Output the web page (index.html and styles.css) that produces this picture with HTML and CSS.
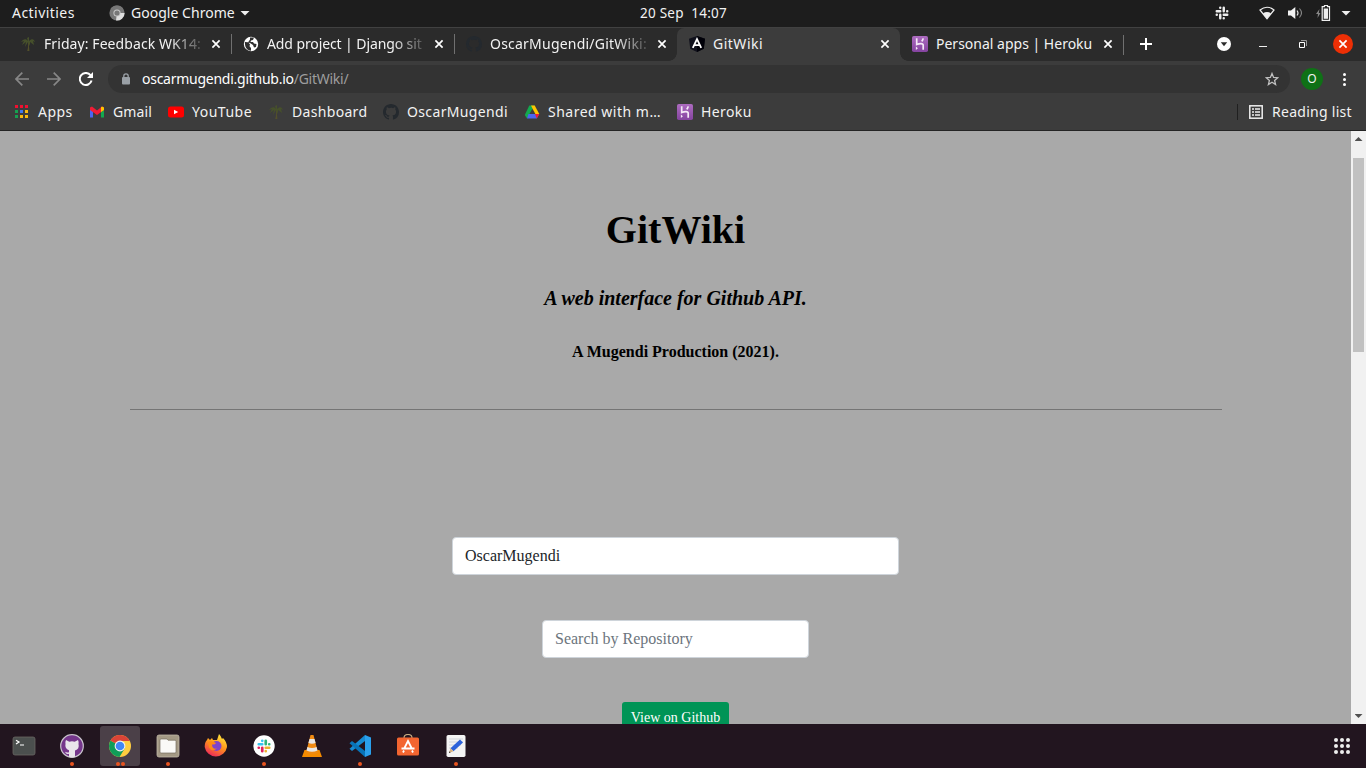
FILE: index.html
```html
<!DOCTYPE html>
<html lang="en">
<head>
<meta charset="utf-8">
<title>GitWiki</title>
<link rel="stylesheet" href="styles.css">
</head>
<body>
<svg class="sprite" aria-hidden="true">
  <symbol id="palm" viewBox="0 0 16 16"><path d="M8 6.5c.3 3 .1 6-.8 8.500h2.200c-.4-3-.5-6-.4-9z" fill="#53502b"/><path d="M8 5C6 2 3 3 1 6l3-1-2 4 4-3-1 5 3-5 2 4 0-4 4 3-1-4 2 1C14 3 12 2 9 5L9 1 7 2z" fill="#46502b"/></symbol>
  <symbol id="github" viewBox="0 0 16 16"><path d="M8 0C3.58 0 0 3.58 0 8c0 3.54 2.29 6.53 5.47 7.59.4.07.55-.17.55-.38 0-.19-.01-.82-.01-1.49-2.01.37-2.53-.49-2.69-.94-.09-.23-.48-.94-.82-1.13-.28-.15-.68-.52-.01-.53.63-.01 1.08.58 1.23.82.72 1.21 1.87.87 2.33.66.07-.52.28-.87.51-1.07-1.78-.2-3.64-.89-3.64-3.95 0-.87.31-1.59.82-2.15-.08-.2-.36-1.02.08-2.12 0 0 .67-.21 2.2.82A7.6 7.6 0 0 1 8 3.86c.68 0 1.36.09 2 .27 1.53-1.04 2.2-.82 2.2-.82.44 1.1.16 1.92.08 2.12.51.56.82 1.27.82 2.15 0 3.07-1.87 3.75-3.65 3.95.29.25.54.73.54 1.48 0 1.07-.01 1.93-.01 2.2 0 .21.15.46.55.38A8.01 8.01 0 0 0 16 8c0-4.42-3.58-8-8-8z" fill="currentColor"/></symbol>
  <symbol id="close" viewBox="0 0 10 10"><path d="M1.4 1.4l7.2 7.2M8.6 1.4L1.4 8.6" stroke="currentColor" stroke-width="1.7" fill="none"/></symbol>
  <linearGradient id="violet" x2="0" y2="1"><stop stop-color="#ad6cc0"/><stop offset="1" stop-color="#8544a0"/></linearGradient>
  <symbol id="heroku" viewBox="0 0 16 16"><rect width="16" height="16" rx="1.800" fill="url(#violet)"/><path d="M4.700 2.300v6.200c2.800-1.200 6.500-1.600 6.500.8v4.400M11.200 2.300q-.2 1.700-1.500 3" fill="none" stroke="#f4e9f7" stroke-width="1.700"/><path d="M3.900 10.500v3.600l2-1.800z" fill="#f4e9f7"/></symbol>
  <symbol id="slack" viewBox="0 0 24 24"><g fill="none" stroke-width="4.2" stroke-linecap="round"><path d="M3 9h6M9 3v.1"/><path d="M15 3v6M21 9h-.1"/><path d="M15 15h6M15 21v-.1"/><path d="M9 15v6M3 15h.1"/></g></symbol>
</svg>

<div class="topbar">
  <span class="activities">Activities</span>
  <svg class="app-icon" viewBox="0 0 16 16"><circle cx="8" cy="8" r="7.6" fill="#777"/><path d="M8 8h7.6A7.6 7.6 0 0 1 7 15.5z" fill="#ddd"/><path d="M1.4 4A7.6 7.6 0 0 1 14.6 4.5H8z" fill="#777"/><circle cx="8" cy="8" r="3.6" fill="#c9c9c9"/><circle cx="8" cy="8" r="2.6" fill="#777"/></svg>
  <span class="app-name">Google Chrome</span>
  <i class="caret app-caret"></i>
  <span class="clock">20 Sep&nbsp; 14:07</span>
  <div class="tray">
    <svg class="tray-slack" viewBox="0 0 24 24"><use href="#slack"/></svg>
    <svg class="tray-wifi" viewBox="0 0 16 14"><path d="M1 4Q8-1.5 15 4L8 12.7z" fill="none" stroke="#eee" stroke-width="1.2"/><path d="M4 7.3Q8 4.8 12 7.3L8 12.7z" fill="#eee"/></svg>
    <svg class="tray-sound" viewBox="0 0 15 14"><path d="M0 4.5h3L7.3 1v12L3 9.5H0z" fill="#f2f2f2"/><path d="M9 4.5q2 2.5 0 5" fill="none" stroke="#ddd" stroke-width="1.2"/><path d="M11.5 2.5q4 4.5 0 9" fill="none" stroke="#888" stroke-width="1.1"/></svg>
    <svg class="tray-battery" viewBox="0 0 15 16"><path d="M3.500 4L0 9h2l-.5 4L4.500 8H2.800z" fill="#888"/><path d="M8.500.5h3v1.200h2v13.600H6.200V1.700h2.300z" fill="none" stroke="#eee" stroke-width="1.200"/><path d="M7.700 3.500H12v10.300H7.700z" fill="#eee"/></svg>
    <i class="caret"></i>
  </div>
</div>

<div class="tabs">
  <div class="tab"><svg class="fav"><use href="#palm"/></svg><span class="title fade t1">Friday: Feedback WK14:</span><svg class="x"><use href="#close"/></svg></div>
  <div class="tab sep"><svg class="fav" viewBox="0 0 16 16"><circle cx="8" cy="8" r="7.200" fill="#fff"/><path d="M2 6l3 .3 2 2-.5 2L8 12v2.800C4 14.500 1.500 11 2 6zM7 1.500h4L10 4 8 4.500 7.500 6H10l1 1.500 2.500.5-.5 3-2 .5-1-2.500-3-2-2-.5L7 3.500z" fill="#303030"/></svg><span class="title fade t2">Add project | Django sit</span><svg class="x"><use href="#close"/></svg></div>
  <div class="tab sep"><svg class="fav dark"><use href="#github"/></svg><span class="title fade t3">OscarMugendi/GitWiki:</span><svg class="x"><use href="#close"/></svg></div>
  <div class="tab active"><svg class="fav" viewBox="0 0 16 16"><path d="M8 0l8 2.700-1.200 10L8 16l-6.800-3.300L0 2.700z" fill="#10111c"/><path d="M8 0l8 2.700-1.200 10L8 16z" fill="#000008"/><path d="M3.800 11.800L8 3l4.200 8.800M5.800 9.200h4.400" stroke="#fff" stroke-width="1.800" fill="none"/></svg><span class="title t4">GitWiki</span><svg class="x"><use href="#close"/></svg></div>
  <div class="tab"><svg class="fav"><use href="#heroku"/></svg><span class="title t5">Personal apps | Heroku</span><svg class="x"><use href="#close"/></svg></div>
  <div class="tab-end"></div>
  <svg class="plus" viewBox="0 0 12 12"><path d="M6 0v12M0 6h12" stroke="#fff" stroke-width="2"/></svg>
  <svg class="search-tabs" viewBox="0 0 14 14"><circle cx="7" cy="7" r="7" fill="#fff"/><path d="M3.800 5.200h6.400L7 9.300z" fill="#2b2b2b"/></svg>
  <svg class="minimize" viewBox="0 0 8 8"><path d="M0 6.500h8" stroke="#eee"/></svg>
  <svg class="restore" viewBox="0 0 8 8"><path d="M2 .5h5.500V6" stroke="#999" fill="none"/><path d="M.5 2.500h5v5h-5z" stroke="#fff" fill="none"/></svg>
  <div class="window-close"><svg class="x"><use href="#close"/></svg></div>
</div>

<div class="toolbar">
  <svg class="nav" viewBox="0 0 14 14"><path d="M14 7H1M7.300.7L1 7l6.300 6.300" stroke="#878787" stroke-width="1.700" fill="none"/></svg>
  <svg class="nav" viewBox="0 0 14 14"><path d="M0 7h13M6.700.7L13 7l-6.300 6.300" stroke="#878787" stroke-width="1.700" fill="none"/></svg>
  <svg class="nav" viewBox="0 0 14 14"><path d="M12.600 8.600A6 6 0 1 1 11.500 3.200" stroke="#fff" stroke-width="2" fill="none"/><path d="M14 0v6H8z" fill="#fff"/></svg>
  <div class="omnibox">
    <svg class="lock" viewBox="0 0 8 12"><path d="M1.800 5V3a2.200 2.200 0 0 1 4.400 0v2" fill="none" stroke="#9aa0a6" stroke-width="1.300"/><rect y="4" width="8" height="7.500" rx="1" fill="#9aa0a6"/></svg>
    <span class="url"><b>oscarmugendi.github.io</b>/GitWiki/</span>
    <svg class="star" viewBox="0 0 14 14"><path d="M7 1.500l1.600 3.900 4.100.3-3.100 2.700 1 4.100L7 10.300l-3.600 2.200 1-4.100L1.300 5.700l4.100-.3z" fill="none" stroke="#c0c0c0" stroke-width="1.300"/></svg>
  </div>
  <div class="avatar">O</div>
  <div class="menu"><i></i><i></i><i></i></div>
</div>

<div class="bookmarks">
  <svg class="bm" viewBox="0 0 16 16"><path d="M1 1h3v3H1zM6 1h3v3H6zM11 1h3v3h-3z" fill="#f01030"/><path d="M1 6h3v3H1zM1 11h3v3H1z" fill="#16a050"/><path d="M6 6h3v3H6z" fill="#4078ef"/><path d="M11 6h3v3h-3zM6 11h3v3H6zM11 11h3v3h-3z" fill="#f9b90d"/></svg><span class="b1">Apps</span>
  <svg class="bm" viewBox="0 0 16 16"><path d="M1 4v9.500h3V5z" fill="#4b65f0"/><path d="M12 5v8.500h3V4z" fill="#13a94f"/><path d="M1 3.500l2-1 5 4 5-4 2 1V6l-7 5-7-5z" fill="#f01c35"/><path d="M12 3.300l1-.8 2 1V6l-3 2z" fill="#ffc400"/></svg><span class="b2">Gmail</span>
  <svg class="bm" viewBox="0 0 16 16"><rect y="2.500" width="16" height="11" rx="2.500" fill="#f00"/><path d="M6 5.700v4.600L10.200 8z" fill="#fff"/></svg><span class="b3">YouTube</span>
  <svg class="bm"><use href="#palm"/></svg><span class="b4">Dashboard</span>
  <svg class="bm dark"><use href="#github"/></svg><span class="b5">OscarMugendi</span>
  <svg class="bm" viewBox="0 0 16 16"><path d="M5.300 1.500h5.400L5 11.500l-2 3L.8 11z" fill="#13a94f"/><path d="M7 1.500h3.700L15.300 10h-4z" fill="#ffc400"/><path d="M4.500 10h10.800l-2.500 4.500H3z" fill="#4b65f0"/><path d="M11 10h4.300l-2.500 4.500z" fill="#f01c35"/><path d="M8 5.500l2.500 4.500h-5z" fill="#3c3c3c"/></svg><span class="b6">Shared with m…</span>
  <svg class="bm"><use href="#heroku"/></svg><span class="b7">Heroku</span>
  <div class="reading"><svg viewBox="0 0 14 14"><rect x=".8" y=".8" width="12.400" height="12.400" fill="none" stroke="#eee" stroke-width="1.500"/><path d="M3 4h2M3 7h2M3 10h2M6 4h5M6 7h5M6 10h5" stroke="#eee" stroke-width="1.500"/></svg><span class="b8">Reading list</span></div>
</div>

<div class="viewport">
  <main class="page">
    <h1>GitWiki</h1>
    <h2>A web interface for Github API.</h2>
    <h4>A Mugendi Production (2021).</h4>
    <hr>
    <input class="field user" type="text" value="OscarMugendi">
    <input class="field repo" type="text" placeholder="Search by Repository">
    <a class="view">View on Github</a>
  </main>
  <div class="scrollbar"><i class="up"></i><div class="thumb"></div><i class="down"></i></div>
</div>

<div class="dock">
  <div class="app"><svg viewBox="0 0 24 24"><rect x="1" y="3" width="22" height="18" rx="2" fill="#4b4f4e" stroke="#696763" stroke-width=".8"/><path d="M4 6.300l3 1.800-3 1.800M8 11h4" stroke="#fff" stroke-width="1.200" fill="none"/></svg></div>
  <div class="app"><svg viewBox="0 0 24 24"><circle cx="12" cy="12" r="11.300" fill="#75368b" stroke="#c9c4cc" stroke-width="1.200"/><path d="M6 6l3.300 1.700q2.700-.7 5.400 0L18 6q1 2 .5 4 1.300 5-3.500 6.500v6.300q-3 1-6 0v-3q-3 1-4-2 2 1.300 4 .5v-2Q4.500 14.500 5.500 10 5 8 6 6z" fill="#e9e5eb"/></svg><i></i></div>
  <div class="app current"><svg viewBox="0 0 24 24"><circle cx="12" cy="12" r="11" fill="#ffcd40"/><path d="M12 12L2.470 6.500A11 11 0 0 0 11.500 23L17 14z" fill="#109d58"/><path d="M12 12L2.470 6.500A11 11 0 0 1 21.800 7H12z" fill="#da4437"/><circle cx="12" cy="12" r="5.400" fill="#f3f3f3"/><circle cx="12" cy="12" r="4.300" fill="#4286f5"/></svg><i></i><i></i></div>
  <div class="app"><svg viewBox="0 0 24 24"><rect x="1" y="1" width="22" height="22" rx="2" fill="#a49985" stroke="#c0b7a7" stroke-width=".8"/><path d="M5 5h6l1 1.200h7q1 0 1 1V18q0 1-1 1H5q-1 0-1-1V6q0-1 1-1z" fill="#faf9f7" stroke="#776e5e" stroke-width=".7"/></svg><i></i></div>
  <div class="app"><svg viewBox="0 0 24 24"><defs><linearGradient id="fire" x1=".8" y1="0" x2=".3" y2="1"><stop stop-color="#ffef3f"/><stop offset=".5" stop-color="#ff941c"/><stop offset="1" stop-color="#ed265b"/></linearGradient></defs><path d="M4 4l2 2 2-2 1 2h4l2-6q2 2 3 5l1-1q4 4 4 9A11.300 11.300 0 0 1 .7 13Q.7 8 3 6z" fill="url(#fire)"/><circle cx="12.500" cy="12" r="5" fill="#8045c9"/><path d="M4 8q4-2 8 1-1 2-4 1.500 0 5 5 4-5 4-8-1z" fill="#ff8a16"/></svg></div>
  <div class="app"><svg viewBox="0 0 24 24"><circle cx="12" cy="12" r="10.700" fill="#fff"/><svg x="5" y="5" width="14" height="14" viewBox="0 0 24 24"><g fill="none" stroke-width="4.600" stroke-linecap="round"><path stroke="#36c5f0" d="M3 9h6M9 3v.1"/><path stroke="#2eb67d" d="M15 3v6M21 9h-.1"/><path stroke="#ecb22e" d="M15 15h6M15 21v-.1"/><path stroke="#e01e5a" d="M9 15v6M3 15h.1"/></g></svg></svg><i></i></div>
  <div class="app"><svg viewBox="0 0 24 24"><path d="M4.500 16h15l2.500 7H2z" fill="#f58b00"/><path d="M10.500 1h3L18 18.500q-6 3-12 0z" fill="#f08a12"/><path d="M9.500 5h5l1.100 4q-3.600 1.500-7.200 0zM7.400 13q4.600 2 9.200 0l.9 3.600q-5.500 2.500-11 0z" fill="#e9e7e4"/></svg></div>
  <div class="app"><svg viewBox="0 0 24 24"><path d="M17 1L1.500 14.700 4 17 19 5.500z" fill="#168bd2"/><path d="M1.500 9.300L4 7l15 11.500L17 23z" fill="#0874b9"/><path d="M17 1l6 2.500v17L17 23z" fill="#2aa0ec"/></svg><i></i></div>
  <div class="app"><svg viewBox="0 0 24 24"><path d="M8 4q0-3.500 4-3.500T16 4" fill="none" stroke="#c6aa82" stroke-width="1.200"/><rect x="1" y="3.500" width="22" height="18" rx="1.500" fill="#f36530"/><path d="M8.200 14.500L12 7l3.800 7.500M5.500 14.500h13M7 18.500l1-2M17 18.500l-1-2" stroke="#fff" stroke-width="1.800" fill="none"/></svg></div>
  <div class="app"><svg viewBox="0 0 24 24"><rect x="2.500" y="1" width="19" height="22" rx="1.700" fill="#f4f4f4"/><path d="M5 5h14M5 8h14M5 11h12M5 14h9" stroke="#ccd0d6" stroke-width=".9"/><path d="M16 5.500L19 8.500 9.500 17.300l-3-3z" fill="#2c62da"/><path d="M6.500 14.300l3 3L5 19z" fill="#d8b282"/><path d="M5.500 17.300L5 19l1.600-.6z" fill="#222"/></svg><i></i></div>
  <div class="app grid"><b></b><b></b><b></b><b></b><b></b><b></b><b></b><b></b><b></b></div>
</div>
</body>
</html>
```

FILE: styles.css
```css
* { box-sizing: border-box; }
body {
  margin: 0;
  width: 1366px;
  height: 768px;
  overflow: hidden;
  display: flex;
  flex-direction: column;
  font: 14px/20px "Noto Sans", sans-serif;
  color: #f2f2f2;
  white-space: nowrap;
}
svg { flex: none; display: block; }
.sprite { position: absolute; width: 0; height: 0; }

.topbar {
  height: 27px;
  flex: none;
  display: flex;
  align-items: center;
  padding: 0 15px 1px 12px;
  background: #1d1d1d;
}
.activities { width: 97px; letter-spacing: .45px; }
.app-icon { width: 16px; height: 16px; }
.app-name { width: 104px; margin-left: 6px; letter-spacing: .03px; }
.caret { width: 10px; height: 5px; background: #eee; clip-path: polygon(0 0, 100% 0, 50% 100%); }
.app-caret { margin-left: 5px; }
.clock { margin-left: 390px; width: 92px; font-size: 13.5px; letter-spacing: .25px; }
.tray { display: flex; align-items: center; margin-left: auto; }
.tray-slack { width: 14px; height: 14px; margin-right: 30px; stroke: #eee; }
.tray-wifi { width: 16px; height: 14px; margin-right: 13px; }
.tray-sound { width: 15px; height: 14px; margin-right: 13px; }
.tray-battery { width: 15px; height: 16px; margin-right: 10px; }

.tabs {
  height: 34px;
  flex: none;
  display: flex;
  align-items: center;
  padding: 0 13px 0 8px;
  background: #2b2b2b;
  border-top: 1px solid #414141;
}
.tab {
  position: relative;
  width: 223px;
  height: 33px;
  flex: none;
  display: flex;
  align-items: center;
  padding: 0 0 2px 12px;
}
.sep::before, .tab-end { content: ""; width: 1px; height: 20px; background: #707070; }
.sep::before { margin: 0 11px 0 -12px; }
.fav { width: 16px; height: 16px; }
.dark { color: #24292e; }
.title { width: 159px; margin-left: 8px; overflow: hidden; }
.fade { -webkit-mask-image: linear-gradient(90deg, #000 125px, transparent 164px); mask-image: linear-gradient(90deg, #000 125px, transparent 164px); }
.t1 { letter-spacing: .08px; }
.t2 { letter-spacing: -.1px; }
.t3 { letter-spacing: .22px; }
.t4 { letter-spacing: .5px; }
.x { width: 10px; height: 10px; margin-left: 8px; color: #fff; }
.active { background: #3c3c3c; border-radius: 7px 7px 0 0; }
.active::before, .active::after {
  content: "";
  position: absolute;
  bottom: 0;
  width: 8px;
  height: 8px;
}
.active::before { left: -8px; background: radial-gradient(circle at 0 0, transparent 7.5px, #3c3c3c 8px); }
.active::after { right: -8px; background: radial-gradient(circle at 100% 0, transparent 7.5px, #3c3c3c 8px); }
.plus { width: 12px; height: 12px; margin: 0 0 1px 16px; }
.search-tabs { width: 14px; height: 14px; margin: 0 0 1px 65px; }
.minimize { width: 8px; height: 8px; margin: 0 0 1px 28px; }
.restore { width: 8px; height: 8px; margin: 0 0 1px 32px; }
.window-close {
  display: flex;
  align-items: center;
  justify-content: center;
  width: 20px;
  height: 20px;
  margin: 0 0 1px auto;
  border-radius: 50%;
  background: #ed2f05;
}
.window-close .x { margin: 0; }

.toolbar {
  height: 36px;
  flex: none;
  display: flex;
  align-items: center;
  padding: 0 20px 0 15px;
  background: #3c3c3c;
}
.nav { width: 14px; height: 14px; margin-right: 18px; }
.nav + .nav + .nav { margin-right: 15px; }
.omnibox {
  width: 1182px;
  height: 28px;
  display: flex;
  align-items: center;
  padding: 0 11px 0 14px;
  border-radius: 14px;
  background: #333;
}
.lock { width: 8px; height: 12px; }
.url { margin-left: 12px; color: #9e9e9e; letter-spacing: -.26px; }
.url b { font-weight: 400; color: #fff; }
.star { width: 14px; height: 14px; margin-left: auto; }
.avatar {
  width: 22px;
  height: 22px;
  margin-left: 11px;
  border-radius: 50%;
  background: #0f7116;
  font-size: 12px;
  line-height: 22px;
  text-align: center;
}
.menu { display: grid; gap: 2px; margin-left: auto; }
.menu i { width: 3px; height: 3px; border-radius: 50%; background: #fff; }

.bookmarks {
  height: 34px;
  flex: none;
  display: flex;
  align-items: center;
  padding: 0 14px 4px;
  background: #3c3c3c;
  border-bottom: 1px solid #242424;
}
.bm { width: 16px; height: 16px; margin-right: 8px; }
.bookmarks > span { margin-right: 16px; }
.b1 { width: 35px; letter-spacing: .45px; }
.b2 { width: 39px; letter-spacing: .15px; }
.b3 { width: 60px; letter-spacing: .5px; }
.b4 { width: 75px; letter-spacing: .32px; }
.b5 { width: 101px; letter-spacing: .36px; }
.b6 { width: 113px; letter-spacing: .5px; }
.b7 { width: 51px; letter-spacing: .4px; }
.b8 { width: 80px; letter-spacing: .28px; }
.reading { display: flex; align-items: center; margin-left: auto; }
.reading::before { content: ""; width: 1px; height: 16px; margin-right: 11px; background: #202020; }
.reading svg { width: 14px; height: 14px; margin-right: 9px; }

.viewport { height: 593px; flex: none; display: flex; overflow: hidden; }
.page {
  width: 1351px;
  padding: 75px 0 0;
  display: flex;
  flex-direction: column;
  align-items: center;
  background: #a9a9a9;
  color: #000;
  font-family: "Liberation Serif", serif;
}
h1 { margin: 0 0 32px; font-size: 40px; line-height: 48px; }
h2 { margin: 0 0 32px; font-size: 20px; line-height: 24px; font-style: italic; }
h4 { margin: 0 0 48px; font-size: 16px; line-height: 19px; }
hr { width: 1092px; height: 1px; margin: 0 0 127px 1px; border: 0; flex: none; background: #757575; }
.field {
  height: 38px;
  flex: none;
  padding: 6px 12px;
  border: 1px solid #ced4da;
  border-radius: 4px;
  background: #fff;
  color: #212529;
  font: 16px/24px "Liberation Serif", serif;
}
.user { width: 447px; margin-bottom: 45px; }
.repo { width: 267px; margin-bottom: 44px; }
.field::placeholder { color: #6c757d; opacity: 1; }
.view {
  height: 31px;
  flex: none;
  padding: 5px 9px;
  border-radius: 3px;
  background: #009456;
  color: #fff;
  font-size: 14px;
  line-height: 21px;
}
.scrollbar {
  width: 15px;
  display: flex;
  flex-direction: column;
  align-items: center;
  padding: 6px 0;
  background: #f1f1f1;
}
.thumb { width: 11px; height: 194px; margin: 17px 0 auto; background: #c1c1c1; }
.up, .down { width: 8px; height: 4px; background: #505050; }
.up { clip-path: polygon(50% 0, 100% 100%, 0 100%); }
.down { clip-path: polygon(0 0, 100% 0, 50% 100%); }

.dock {
  height: 44px;
  flex: none;
  display: flex;
  gap: 8px;
  padding: 2px 4px;
  background: #22151f;
}
.app {
  width: 40px;
  height: 40px;
  display: flex;
  flex-wrap: wrap;
  justify-content: center;
  align-content: flex-start;
  column-gap: 1px;
  padding-top: 8px;
  border-radius: 3px;
}
.app > svg { width: 24px; height: 24px; margin: 0 7px 4px; }
.app > i { width: 4px; height: 4px; border-radius: 50%; background: #e95420; }
.current { background: #4b4048; }
.grid {
  display: grid;
  grid-template-columns: repeat(3, 4px);
  grid-auto-rows: 4px;
  gap: 2px;
  margin-left: auto;
  padding: 12px 0 0;
}
.grid b { width: 4px; height: 4px; border-radius: 2px; background: #eee; }
```
